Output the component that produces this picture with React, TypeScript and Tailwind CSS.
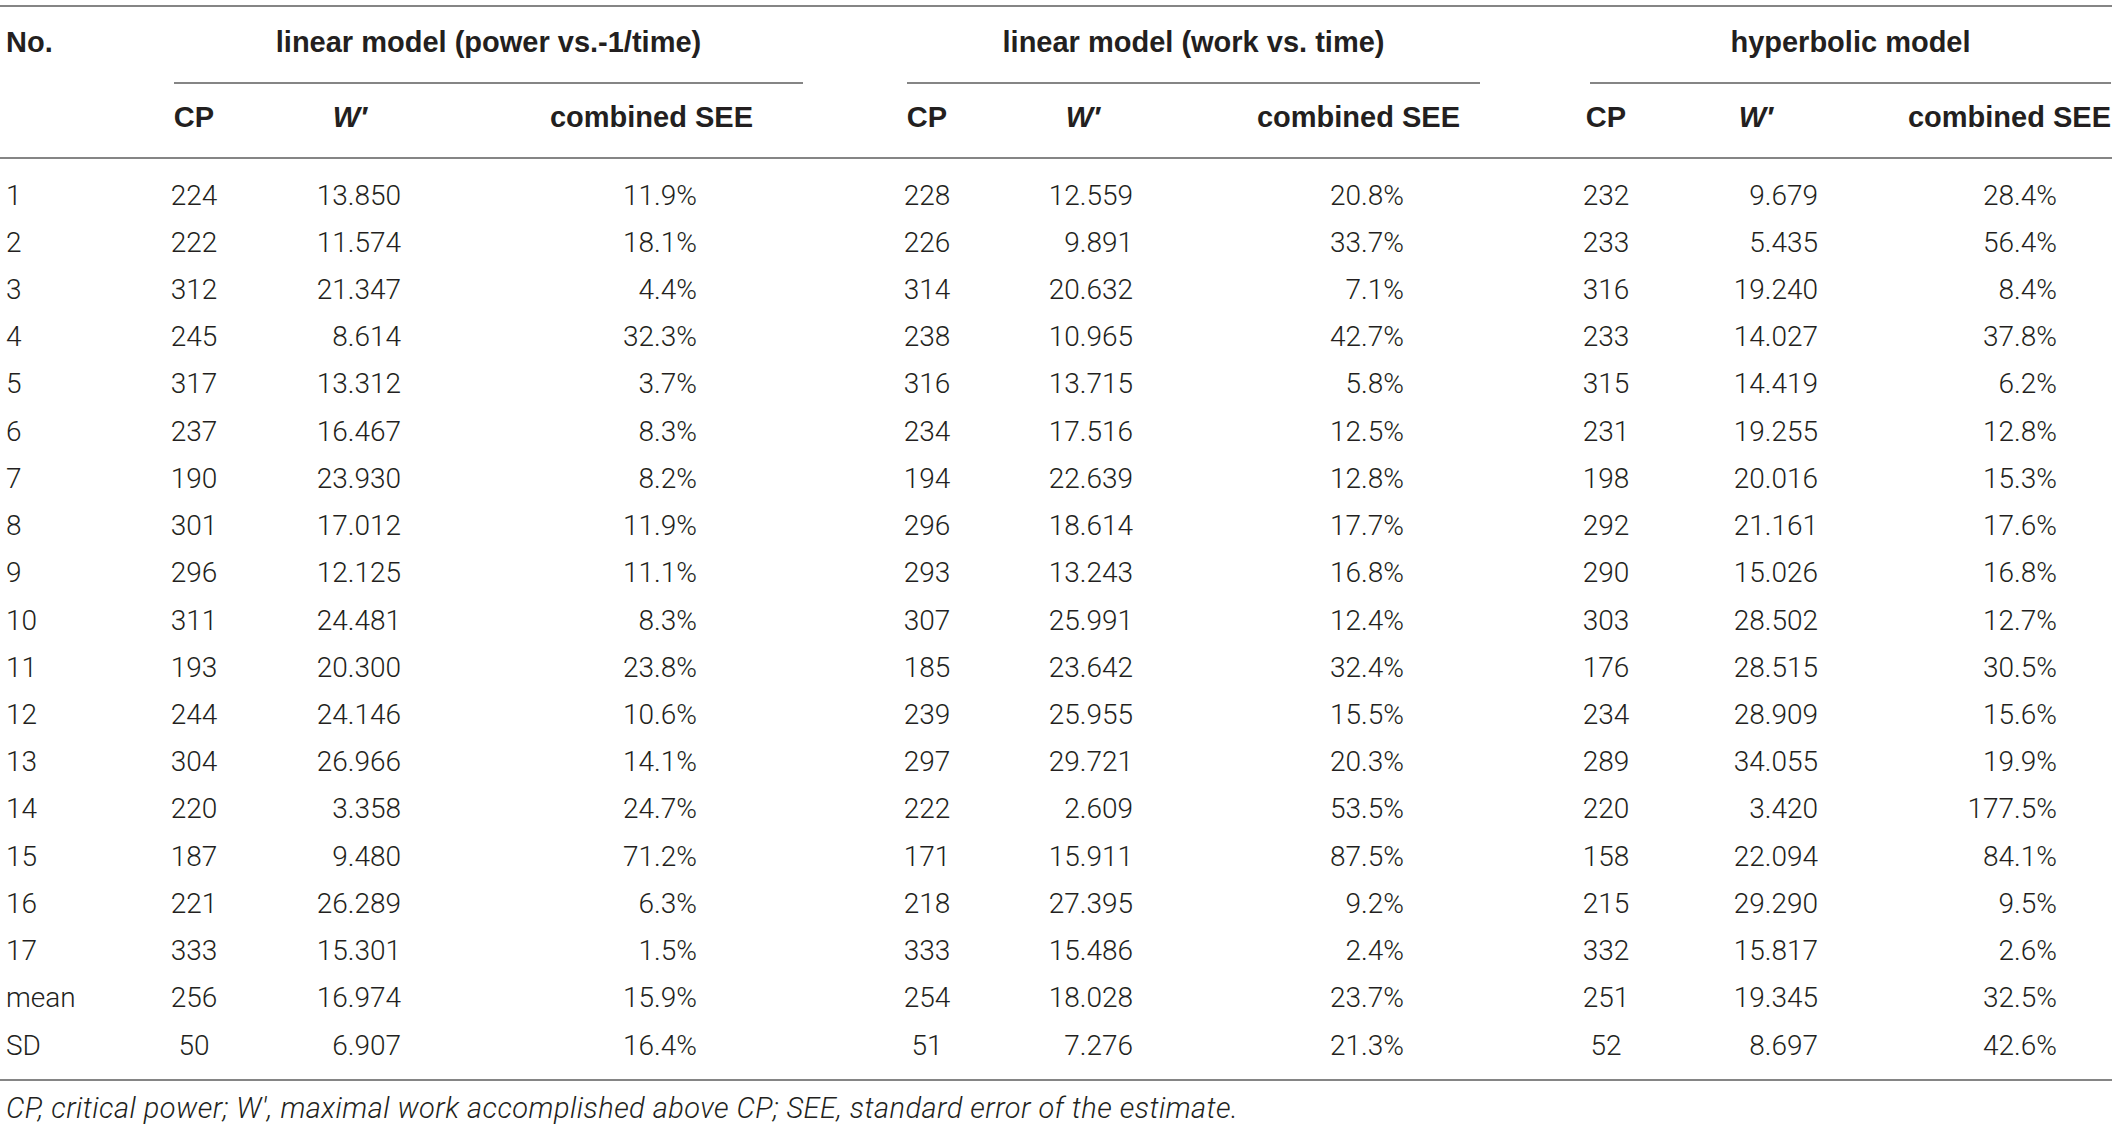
import React from "react";

const COLS =
  "grid grid-cols-[174px_40px_187px_402px_104px_40px_186px_347px_110px_32px_196px_293px]";

type Row = [string, string, string, string, string, string, string, string, string, string];

const rows: Row[] = [
  ["1", "224", "13.850", "11.9%", "228", "12.559", "20.8%", "232", "9.679", "28.4%"],
  ["2", "222", "11.574", "18.1%", "226", "9.891", "33.7%", "233", "5.435", "56.4%"],
  ["3", "312", "21.347", "4.4%", "314", "20.632", "7.1%", "316", "19.240", "8.4%"],
  ["4", "245", "8.614", "32.3%", "238", "10.965", "42.7%", "233", "14.027", "37.8%"],
  ["5", "317", "13.312", "3.7%", "316", "13.715", "5.8%", "315", "14.419", "6.2%"],
  ["6", "237", "16.467", "8.3%", "234", "17.516", "12.5%", "231", "19.255", "12.8%"],
  ["7", "190", "23.930", "8.2%", "194", "22.639", "12.8%", "198", "20.016", "15.3%"],
  ["8", "301", "17.012", "11.9%", "296", "18.614", "17.7%", "292", "21.161", "17.6%"],
  ["9", "296", "12.125", "11.1%", "293", "13.243", "16.8%", "290", "15.026", "16.8%"],
  ["10", "311", "24.481", "8.3%", "307", "25.991", "12.4%", "303", "28.502", "12.7%"],
  ["11", "193", "20.300", "23.8%", "185", "23.642", "32.4%", "176", "28.515", "30.5%"],
  ["12", "244", "24.146", "10.6%", "239", "25.955", "15.5%", "234", "28.909", "15.6%"],
  ["13", "304", "26.966", "14.1%", "297", "29.721", "20.3%", "289", "34.055", "19.9%"],
  ["14", "220", "3.358", "24.7%", "222", "2.609", "53.5%", "220", "3.420", "177.5%"],
  ["15", "187", "9.480", "71.2%", "171", "15.911", "87.5%", "158", "22.094", "84.1%"],
  ["16", "221", "26.289", "6.3%", "218", "27.395", "9.2%", "215", "29.290", "9.5%"],
  ["17", "333", "15.301", "1.5%", "333", "15.486", "2.4%", "332", "15.817", "2.6%"],
  ["mean", "256", "16.974", "15.9%", "254", "18.028", "23.7%", "251", "19.345", "32.5%"],
  ["SD", "50", "6.907", "16.4%", "51", "7.276", "21.3%", "52", "8.697", "42.6%"],
];

function GroupHead({ title }: { title: string }) {
  return (
    <div className="col-span-3 flex flex-col">
      <div className="h-[71px] flex items-center justify-center whitespace-nowrap">{title}</div>
      <div className="mt-[4px] h-[2px] bg-[#858585]" />
    </div>
  );
}

export default function App() {
  return (
    <div className="bg-white w-[2120px] h-[1131px] overflow-hidden text-[#231f20]">
      <div className="w-[2112px] pt-[5px]">
        <div className="h-[2px] bg-[#858585]" />
        {/* header row 1 */}
        <div
          className={`${COLS} font-bold text-[29px] font-['Liberation_Sans',Arial,sans-serif]`}
        >
          <div className="h-[71px] flex items-center pl-[6px]">No.</div>
          <GroupHead title="linear model (power vs.-1/time)" />
          <div />
          <GroupHead title="linear model (work vs. time)" />
          <div />
          <GroupHead title="hyperbolic model" />
        </div>
        {/* header row 2 */}
        <div
          className={`${COLS} h-[68px] font-bold text-[29px] font-['Liberation_Sans',Arial,sans-serif] whitespace-nowrap`}
        >
          <div />
          <div className="flex items-center justify-center">CP</div>
          <div className="flex items-center justify-end pr-[34px] italic">W′</div>
          <div className="flex items-center justify-end pr-[50px]">combined SEE</div>
          <div />
          <div className="flex items-center justify-center">CP</div>
          <div className="flex items-center justify-end pr-[33px] italic">W′</div>
          <div className="flex items-center justify-end pr-[20px]">combined SEE</div>
          <div />
          <div className="flex items-center justify-center">CP</div>
          <div className="flex items-center justify-end pr-[45px] italic">W′</div>
          <div className="flex items-center justify-end">combined SEE</div>
        </div>
        <div className="mt-[5px] h-[2px] bg-[#858585]" />
        {/* body */}
        <div className="pt-[13px] font-['Roboto','Liberation_Sans',sans-serif] font-light text-[28px] whitespace-nowrap">
          {rows.map((r) => (
            <div key={r[0]} className={`${COLS} h-[47.22px]`}>
              <div className="flex items-center pl-[6px]">{r[0]}</div>
              <div className="flex items-center justify-center">{r[1]}</div>
              <div className="flex items-center justify-end">{r[2]}</div>
              <div className="flex items-center justify-end pr-[106px]">{r[3]}</div>
              <div />
              <div className="flex items-center justify-center">{r[4]}</div>
              <div className="flex items-center justify-end">{r[5]}</div>
              <div className="flex items-center justify-end pr-[76px]">{r[6]}</div>
              <div />
              <div className="flex items-center justify-center">{r[7]}</div>
              <div className="flex items-center justify-end">{r[8]}</div>
              <div className="flex items-center justify-end pr-[54px]">{r[9]}</div>
            </div>
          ))}
        </div>
        <div className="mt-[10px] h-[2px] bg-[#858585]" />
        <div className="mt-[12px] pl-[6px] font-['Roboto','Liberation_Sans',sans-serif] font-light italic text-[29px] leading-[30px] tracking-[0.45px] whitespace-nowrap">
          CP, critical power; W′, maximal work accomplished above CP; SEE, standard error of the estimate.
        </div>
      </div>
    </div>
  );
}
